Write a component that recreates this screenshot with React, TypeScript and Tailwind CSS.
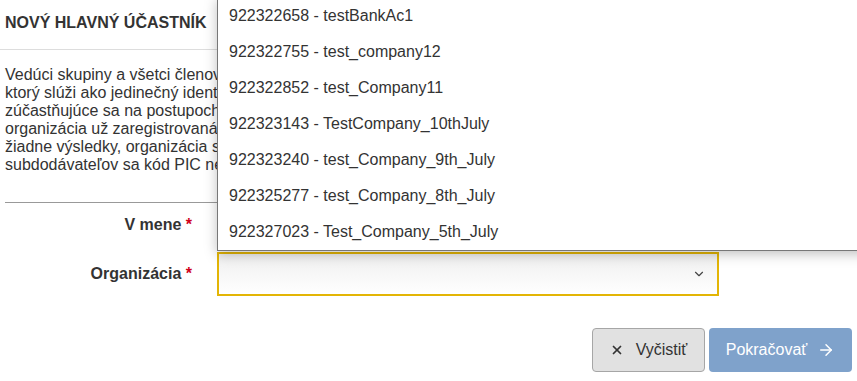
import { ChevronDown, X, ArrowRight } from 'lucide-react'

const options = [
  '922322658 - testBankAc1',
  '922322755 - test_company12',
  '922322852 - test_Company11',
  '922323143 - TestCompany_10thJuly',
  '922323240 - test_Company_9th_July',
  '922325277 - test_Company_8th_July',
  '922327023 - Test_Company_5th_July',
]

export default function App() {
  return (
    <div
      className="relative h-[381px] w-[857px] overflow-hidden bg-white text-[#333]"
      style={{ fontFamily: '"Liberation Sans", Arial, sans-serif' }}
    >
      <div className="border-b border-[#ddd] px-[5px] pt-[14px] pb-[17px] text-[16px] font-bold leading-[18px]">
        NOVÝ HLAVNÝ ÚČASTNÍK
      </div>

      <p className="mt-[16px] px-[5px] text-[16px] leading-[18px] whitespace-nowrap">
        Vedúci skupiny a všetci členovia skupiny musia mať kód identifikácie účastníka (PIC),
        <br />
        ktorý slúži ako jedinečný identifikátor organizácie. Všetky organizácie
        <br />
        zúčastňujúce sa na postupoch verejného obstarávania musia overiť, či je ich
        <br />
        organizácia už zaregistrovaná v registri účastníkov. Ak vyhľadávanie neprinesie
        <br />
        žiadne výsledky, organizácia sa musí zaregistrovať. Pre subdodávateľov a
        <br />
        subdodávateľov sa kód PIC nevyžaduje.
      </p>

      <div className="mx-[5px] mt-[28px] border-t border-[#999]" />

      <div className="flex flex-col gap-[5px]">
        <div className="flex h-[44px] items-center">
          <div className="w-[217px] pr-[25px] text-right text-[16px] font-bold">
            V mene <span className="text-[#d0021b]">*</span>
          </div>
        </div>
        <div className="flex h-[44px] items-center">
          <div className="w-[217px] pr-[25px] text-right text-[16px] font-bold">
            Organizácia <span className="text-[#d0021b]">*</span>
          </div>
          <div className="flex h-[44px] w-[502px] items-center justify-end border-2 border-[#e3b505] bg-gradient-to-b from-[#efefef] to-white pr-[11px]">
            <ChevronDown size={14} strokeWidth={2} className="text-[#444]" />
          </div>
        </div>
      </div>

      <div className="mt-[32px] flex justify-end gap-[4px] pr-[5px]">
        <button className="flex h-[44px] w-[113px] items-center justify-center gap-[12px] rounded-[4px] border border-[#a6a6a6] bg-[#e1e1e1] text-[16px] text-[#333]">
          <X size={14} strokeWidth={3} />
          Vyčistiť
        </button>
        <button className="flex h-[44px] w-[143px] items-center justify-center gap-[10px] rounded-[4px] bg-[#7fa2cb] text-[16px] text-white">
          Pokračovať
          <ArrowRight size={18} strokeWidth={2} />
        </button>
      </div>

      <div className="absolute top-[-3px] left-[217px] w-[700px] border border-[#777] bg-white shadow-[0_3px_12px_rgba(0,0,0,0.25)]">
        {options.map((o) => (
          <div key={o} className="flex h-[36px] items-center pl-[11px] text-[16px] text-[#333]">
            {o}
          </div>
        ))}
      </div>
    </div>
  )
}
